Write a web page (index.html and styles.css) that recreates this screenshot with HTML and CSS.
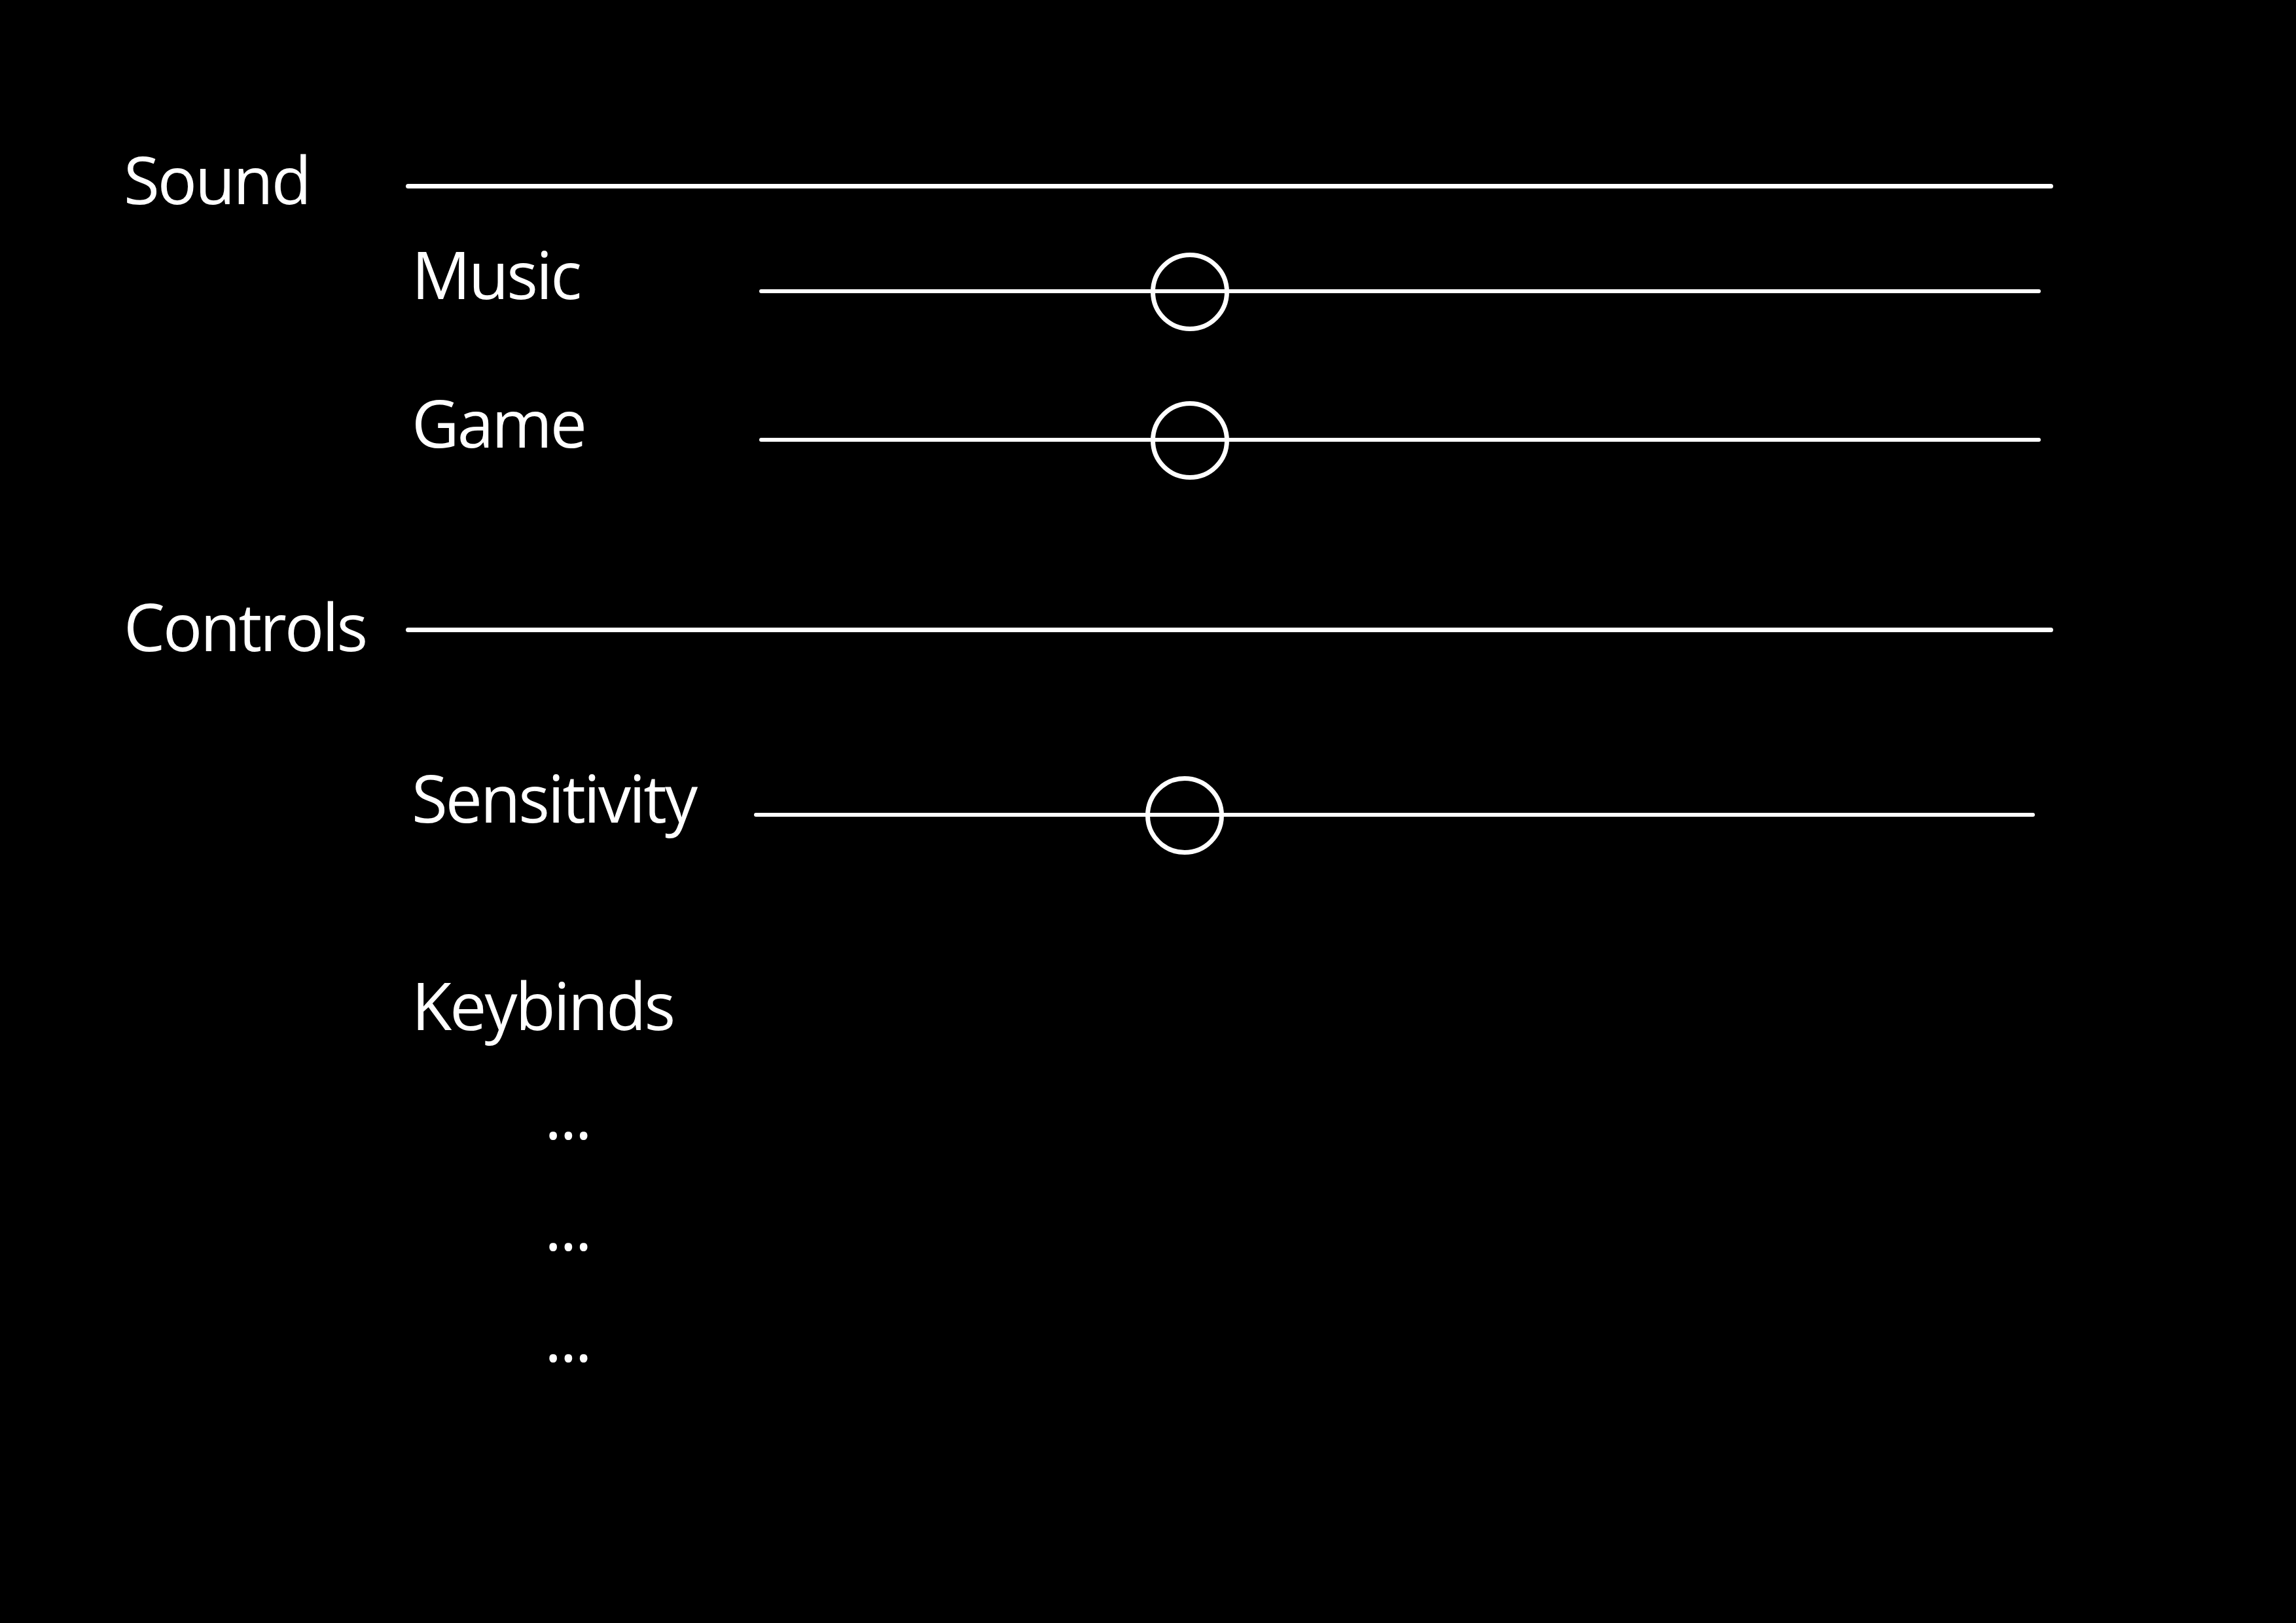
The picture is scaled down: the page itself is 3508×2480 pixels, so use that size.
FILE: index.html
```html
<!DOCTYPE html>
<html lang="en">
<head>
    <meta charset="UTF-8">
    <meta name="viewport" content="width=device-width, initial-scale=1.0">
    <title>Settings</title>
    <link rel="stylesheet" href="styles.css">
</head>
<body>

    <main class="settings">

        <!-- Sound -->
        <section class="group group-sound">
            <div class="group-head">
                <h2 class="group-title">Sound</h2>
                <span class="rule"></span>
            </div>
            <div class="group-body">
                <div class="option">
                    <span class="option-label">Music</span>
                    <div class="slider">
                        <div class="track"></div>
                        <div class="knob" style="left: 33.6%"></div>
                    </div>
                </div>
                <div class="option">
                    <span class="option-label">Game</span>
                    <div class="slider">
                        <div class="track"></div>
                        <div class="knob" style="left: 33.6%"></div>
                    </div>
                </div>
            </div>
        </section>

        <!-- Controls -->
        <section class="group group-controls">
            <div class="group-head">
                <h2 class="group-title">Controls</h2>
                <span class="rule"></span>
            </div>
            <div class="group-body">
                <div class="option">
                    <span class="option-label">Sensitivity</span>
                    <div class="slider">
                        <div class="track"></div>
                        <div class="knob" style="left: 33.6%"></div>
                    </div>
                </div>
                <div class="keybinds">
                    <span class="option-label">Keybinds</span>
                    <ul class="keybind-list">
                        <li>...</li>
                        <li>...</li>
                        <li>...</li>
                    </ul>
                </div>
            </div>
        </section>

    </main>

</body>
</html>
```

FILE: styles.css
```css
body {
    margin: 0;
    background-color: #000000;
    color: #ffffff;
    font-family: "Open Sans", "Noto Sans", sans-serif;
    font-size: 100px;
    line-height: 100px;
    letter-spacing: -3px;
}
.settings {
    padding: 223px 371px 0 189px;
}
.group-head {
    display: flex;
    height: 100px;
}
.group-title {
    width: 431px;
    margin: 0;
    font-size: 100px;
    font-weight: normal;
}
.rule {
    flex: 1;
    height: 7px;
    margin-top: 53px;
    border-radius: 4px;
    background-color: #ffffff;
}
.group-body {
    display: flex;
    flex-direction: column;
    padding-left: 440px;
}

/* Sound */
.group-sound .rule {
    margin-top: 58px;
}
.group-sound .group-body {
    margin-top: 45px;
    gap: 127px;
}

/* Controls */
.group-controls {
    margin-top: 211px;
}
.group-controls .group-body {
    margin-top: 162px;
    gap: 217px;
}
.group-controls .option {
    margin-right: 28px;
}
.group-controls .option .option-label {
    width: 523px;
}

.option {
    display: flex;
    height: 100px;
    margin-right: 19px;
}
.option-label {
    width: 531px;
}
.slider {
    flex: 1;
    position: relative;
    height: 100px;
}
.track {
    height: 6px;
    margin-top: 74px;
    border-radius: 3px;
    background-color: #ffffff;
}
.knob {
    position: absolute;
    top: 78px;
    width: 120px;
    height: 120px;
    box-sizing: border-box;
    border: 7px solid #ffffff;
    border-radius: 50%;
    transform: translate(-50%, -50%);
}
.keybind-list {
    list-style: none;
    margin: 67px 0 0;
    padding: 0 0 0 203px;
    display: flex;
    flex-direction: column;
    gap: 70px;
}
```
